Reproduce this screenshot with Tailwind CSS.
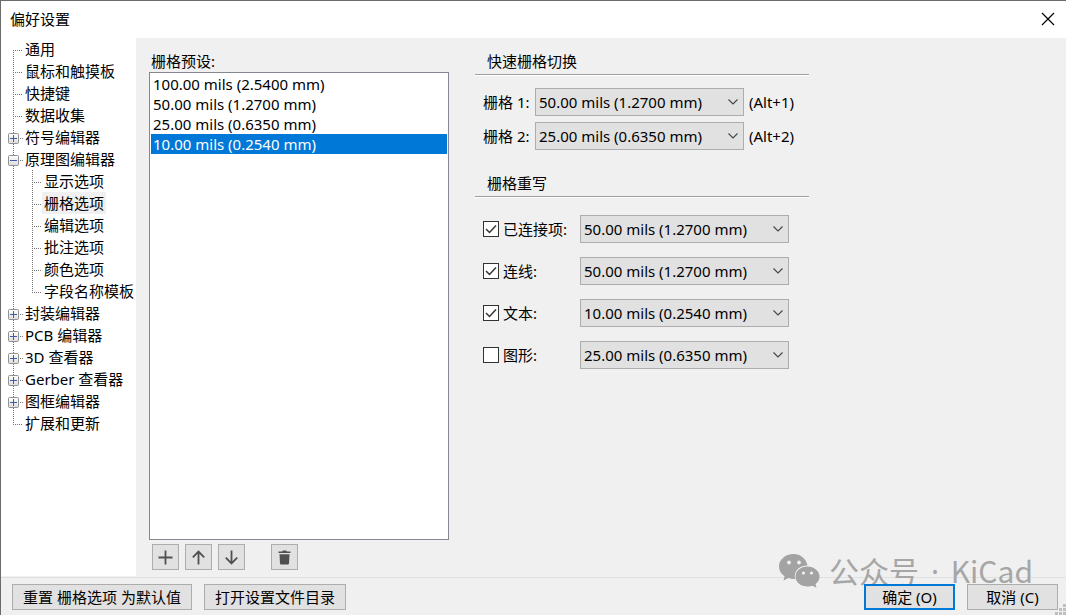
<!DOCTYPE html>
<html lang="zh-CN">
<head>
<meta charset="utf-8">
<title>偏好设置</title>
<script src="https://cdn.jsdelivr.net/npm/@tailwindcss/browser@4"></script>
</head>
<body class="bg-[#f0f0f0] text-black font-['Noto_Sans','Noto_Sans_CJK_SC',sans-serif] text-[15px] leading-[20px]">

<svg class="absolute size-0" aria-hidden="true">
  <defs>
    <linearGradient id="boxfill" x1="0" y1="0" x2="0" y2="1"><stop offset="0" stop-color="#fff"/><stop offset="1" stop-color="#dcdcdc"/></linearGradient>
    <symbol id="first" viewBox="0 0 24 22"><path d="M12.5 12V22M12 12.5H22" fill="none" stroke="#777" stroke-dasharray="1 1"/></symbol>
    <symbol id="mid" viewBox="0 0 24 22"><path d="M12.5 0V22M12 12.5H22" fill="none" stroke="#777" stroke-dasharray="1 1"/></symbol>
    <symbol id="last" viewBox="0 0 24 22"><path d="M12.5 0V12M12 12.5H22" fill="none" stroke="#777" stroke-dasharray="1 1"/></symbol>
    <symbol id="minus" viewBox="0 0 24 22"><path d="M12.5 0V22M19 12.5H22" fill="none" stroke="#777" stroke-dasharray="1 1"/><rect x="7.5" y="7.5" width="10" height="10" rx="1" fill="url(#boxfill)" stroke="#919191"/><path d="M9 12.5H16" stroke="#3c5ea8"/></symbol>
    <symbol id="plus" viewBox="0 0 24 22"><path d="M12.5 0V22M19 12.5H22" fill="none" stroke="#777" stroke-dasharray="1 1"/><rect x="7.5" y="7.5" width="10" height="10" rx="1" fill="url(#boxfill)" stroke="#919191"/><path d="M9 12.5H16M12.500 9V16" stroke="#3c5ea8"/></symbol>
    <symbol id="sub" viewBox="0 0 41 22"><path d="M12.5 0V22M31.5 0V22M31 12.5H41" fill="none" stroke="#777" stroke-dasharray="1 1"/></symbol>
    <symbol id="sublast" viewBox="0 0 41 22"><path d="M12.5 0V22M31.5 0V12M31 12.5H41" fill="none" stroke="#777" stroke-dasharray="1 1"/></symbol>
    <symbol id="chev" viewBox="0 0 10 6"><path d="M0.5 0.5L5 5L9.5 0.5" fill="none" stroke="#444" stroke-width="1.1"/></symbol>
    <symbol id="tick" viewBox="0 0 16 16"><path d="M3 8L6.5 11.5L13 4.5" fill="none" stroke="#333" stroke-width="1.5"/></symbol>
  </defs>
</svg>

<div class="relative flex min-h-screen flex-col border-l border-t border-[#6b6b6b]">
  <header class="flex h-[37px] items-center justify-between bg-white pb-[2px] pl-[9px] pr-[11px]">
    <h1>偏好设置</h1>
    <button aria-label="关闭" class="size-[14px]"><svg viewBox="0 0 14 14" class="size-[14px]"><path d="M1 1L13 13M13 1L1 13" stroke="#000" stroke-width="1.2"/></svg></button>
  </header>

  <div class="flex flex-1">
    <nav aria-label="设置页面" class="w-[135px] shrink-0 overflow-hidden whitespace-nowrap bg-white leading-[22px]">
      <ul>
        <li class="flex h-[22px]"><svg class="h-[22px] w-6 shrink-0"><use href="#first"/></svg><a href="#">通用</a></li>
        <li class="flex h-[22px]"><svg class="h-[22px] w-6 shrink-0"><use href="#mid"/></svg><a href="#">鼠标和触摸板</a></li>
        <li class="flex h-[22px]"><svg class="h-[22px] w-6 shrink-0"><use href="#mid"/></svg><a href="#">快捷键</a></li>
        <li class="flex h-[22px]"><svg class="h-[22px] w-6 shrink-0"><use href="#mid"/></svg><a href="#">数据收集</a></li>
        <li class="flex h-[22px]"><svg class="h-[22px] w-6 shrink-0"><use href="#plus"/></svg><a href="#">符号编辑器</a></li>
        <li>
          <div class="flex h-[22px]"><svg class="h-[22px] w-6 shrink-0"><use href="#minus"/></svg><a href="#">原理图编辑器</a></div>
          <ul>
            <li class="flex h-[22px]"><svg class="h-[22px] w-[41px] shrink-0"><use href="#sub"/></svg><a href="#" class="px-[2px]">显示选项</a></li>
            <li class="flex h-[22px]"><svg class="h-[22px] w-[41px] shrink-0"><use href="#sub"/></svg><a href="#" aria-current="page" class="bg-[#f0f0f0] px-[2px]">栅格选项</a></li>
            <li class="flex h-[22px]"><svg class="h-[22px] w-[41px] shrink-0"><use href="#sub"/></svg><a href="#" class="px-[2px]">编辑选项</a></li>
            <li class="flex h-[22px]"><svg class="h-[22px] w-[41px] shrink-0"><use href="#sub"/></svg><a href="#" class="px-[2px]">批注选项</a></li>
            <li class="flex h-[22px]"><svg class="h-[22px] w-[41px] shrink-0"><use href="#sub"/></svg><a href="#" class="px-[2px]">颜色选项</a></li>
            <li class="flex h-[22px]"><svg class="h-[22px] w-[41px] shrink-0"><use href="#sublast"/></svg><a href="#" class="px-[2px]">字段名称模板</a></li>
          </ul>
        </li>
        <li class="flex h-[22px]"><svg class="h-[22px] w-6 shrink-0"><use href="#plus"/></svg><a href="#">封装编辑器</a></li>
        <li class="flex h-[22px]"><svg class="h-[22px] w-6 shrink-0"><use href="#plus"/></svg><a href="#">PCB 编辑器</a></li>
        <li class="flex h-[22px]"><svg class="h-[22px] w-6 shrink-0"><use href="#plus"/></svg><a href="#">3D 查看器</a></li>
        <li class="flex h-[22px]"><svg class="h-[22px] w-6 shrink-0"><use href="#plus"/></svg><a href="#">Gerber 查看器</a></li>
        <li class="flex h-[22px]"><svg class="h-[22px] w-6 shrink-0"><use href="#plus"/></svg><a href="#">图框编辑器</a></li>
        <li class="flex h-[22px]"><svg class="h-[22px] w-6 shrink-0"><use href="#last"/></svg><a href="#">扩展和更新</a></li>
      </ul>
    </nav>

    <main class="flex flex-1 gap-[26px] pl-[13px] pt-[13px]">
      <section class="flex w-[300px] flex-col pb-[6px]">
        <label for="presets" class="pl-[2px]">栅格预设:</label>
        <select id="presets" size="4" class="mt-px block w-full flex-1 overflow-hidden border border-[#828790] bg-white p-px outline-none">
          <option class="h-5 min-h-0 p-0 px-[2px] leading-[20px]">100.00 mils (2.5400 mm)</option>
          <option class="h-5 min-h-0 p-0 px-[2px] leading-[20px]">50.00 mils (1.2700 mm)</option>
          <option class="h-5 min-h-0 p-0 px-[2px] leading-[20px]">25.00 mils (0.6350 mm)</option>
          <option selected class="h-5 min-h-0 p-0 px-[2px] leading-[20px] checked:bg-[linear-gradient(#0078d7,#0078d7)] checked:[-webkit-text-fill-color:white]">10.00 mils (0.2540 mm)</option>
        </select>
        <div class="mt-1 flex gap-[6px] pl-[3px]">
          <button aria-label="添加" class="flex h-[26px] w-[27px] items-center justify-center border border-[#adadad] bg-[#e1e1e1]"><svg viewBox="0 0 15 15" class="size-[15px]"><path d="M7.500 0.500V14.500M0.500 7.500H14.500" stroke="#505050" stroke-width="1.8"/></svg></button>
          <button aria-label="上移" class="flex h-[26px] w-[27px] items-center justify-center border border-[#adadad] bg-[#e1e1e1]"><svg viewBox="0 0 15 15" class="size-[15px]"><path d="M7.500 14.500V2M1.800 7.300L7.500 1.600L13.200 7.300" fill="none" stroke="#505050" stroke-width="1.8"/></svg></button>
          <button aria-label="下移" class="flex h-[26px] w-[27px] items-center justify-center border border-[#adadad] bg-[#e1e1e1]"><svg viewBox="0 0 15 15" class="size-[15px]"><path d="M7.500 0.500V13M1.800 7.700L7.500 13.400L13.200 7.700" fill="none" stroke="#505050" stroke-width="1.8"/></svg></button>
          <button aria-label="删除" class="ml-5 flex h-[26px] w-[27px] items-center justify-center border border-[#adadad] bg-[#e1e1e1]"><svg viewBox="0 0 15 15" class="size-[15px]"><path d="M1.500 1.500H5L6 0.500H9L10 1.500H13.500V3.100H1.500ZM2.500 4.200H12.500L12 13.500Q11.900 14.500 10.900 14.500H4.100Q3.100 14.500 3 13.500Z" fill="#505050"/></svg></button>
        </div>
      </section>

      <div class="w-[334px]">
        <section>
          <h2 class="border-b border-[#a0a0a0] pb-[3px] pl-3 shadow-[0_1px_0_#fff]">快速栅格切换</h2>
          <div class="mt-[13px] flex flex-col gap-[6px] pl-2">
            <div class="flex items-center">
              <label for="g1" class="w-[52px]">栅格 1:</label>
              <div class="grid w-[209px] items-center"><select id="g1" class="col-start-1 row-start-1 h-7 appearance-none border border-[#adadad] bg-[#e1e1e1] pl-[3px]"><option>50.00 mils (1.2700 mm)</option></select><svg class="pointer-events-none col-start-1 row-start-1 mr-[6px] h-[6px] w-[10px] justify-self-end"><use href="#chev"/></svg></div>
              <span class="pl-[5px]">(Alt+1)</span>
            </div>
            <div class="flex items-center">
              <label for="g2" class="w-[52px]">栅格 2:</label>
              <div class="grid w-[209px] items-center"><select id="g2" class="col-start-1 row-start-1 h-7 appearance-none border border-[#adadad] bg-[#e1e1e1] pl-[3px]"><option>25.00 mils (0.6350 mm)</option></select><svg class="pointer-events-none col-start-1 row-start-1 mr-[6px] h-[6px] w-[10px] justify-self-end"><use href="#chev"/></svg></div>
              <span class="pl-[5px]">(Alt+2)</span>
            </div>
          </div>
        </section>
        <section class="mt-[23px]">
          <h2 class="border-b border-[#a0a0a0] pb-[3px] pl-3 shadow-[0_1px_0_#fff]">栅格重写</h2>
          <div class="mt-[18px] flex flex-col gap-[14px] pl-2">
            <div class="flex items-center">
              <span class="grid"><input id="c1" type="checkbox" checked class="peer col-start-1 row-start-1 size-4 appearance-none border border-[#333] bg-white"><svg class="pointer-events-none invisible col-start-1 row-start-1 size-4 peer-checked:visible"><use href="#tick"/></svg></span>
              <label for="c1" class="w-[81px] pl-1">已连接项:</label>
              <div class="grid w-[209px] items-center"><select aria-label="已连接项" class="col-start-1 row-start-1 h-7 appearance-none border border-[#adadad] bg-[#e1e1e1] pl-[3px]"><option>50.00 mils (1.2700 mm)</option></select><svg class="pointer-events-none col-start-1 row-start-1 mr-[6px] h-[6px] w-[10px] justify-self-end"><use href="#chev"/></svg></div>
            </div>
            <div class="flex items-center">
              <span class="grid"><input id="c2" type="checkbox" checked class="peer col-start-1 row-start-1 size-4 appearance-none border border-[#333] bg-white"><svg class="pointer-events-none invisible col-start-1 row-start-1 size-4 peer-checked:visible"><use href="#tick"/></svg></span>
              <label for="c2" class="w-[81px] pl-1">连线:</label>
              <div class="grid w-[209px] items-center"><select aria-label="连线" class="col-start-1 row-start-1 h-7 appearance-none border border-[#adadad] bg-[#e1e1e1] pl-[3px]"><option>50.00 mils (1.2700 mm)</option></select><svg class="pointer-events-none col-start-1 row-start-1 mr-[6px] h-[6px] w-[10px] justify-self-end"><use href="#chev"/></svg></div>
            </div>
            <div class="flex items-center">
              <span class="grid"><input id="c3" type="checkbox" checked class="peer col-start-1 row-start-1 size-4 appearance-none border border-[#333] bg-white"><svg class="pointer-events-none invisible col-start-1 row-start-1 size-4 peer-checked:visible"><use href="#tick"/></svg></span>
              <label for="c3" class="w-[81px] pl-1">文本:</label>
              <div class="grid w-[209px] items-center"><select aria-label="文本" class="col-start-1 row-start-1 h-7 appearance-none border border-[#adadad] bg-[#e1e1e1] pl-[3px]"><option>10.00 mils (0.2540 mm)</option></select><svg class="pointer-events-none col-start-1 row-start-1 mr-[6px] h-[6px] w-[10px] justify-self-end"><use href="#chev"/></svg></div>
            </div>
            <div class="flex items-center">
              <span class="grid"><input id="c4" type="checkbox" class="peer col-start-1 row-start-1 size-4 appearance-none border border-[#333] bg-white"><svg class="pointer-events-none invisible col-start-1 row-start-1 size-4 peer-checked:visible"><use href="#tick"/></svg></span>
              <label for="c4" class="w-[81px] pl-1">图形:</label>
              <div class="grid w-[209px] items-center"><select aria-label="图形" class="col-start-1 row-start-1 h-7 appearance-none border border-[#adadad] bg-[#e1e1e1] pl-[3px]"><option>25.00 mils (0.6350 mm)</option></select><svg class="pointer-events-none col-start-1 row-start-1 mr-[6px] h-[6px] w-[10px] justify-self-end"><use href="#chev"/></svg></div>
            </div>
          </div>
        </section>
      </div>
    </main>
  </div>

  <footer class="mt-px flex gap-3 border-t border-[#e0e0e0] pb-[5px] pl-[11px] pr-2 pt-[6px]">
    <button class="h-[26px] w-[180px] border border-[#adadad] bg-[#e1e1e1]">重置 栅格选项 为默认值</button>
    <button class="h-[26px] w-[142px] border border-[#adadad] bg-[#e1e1e1]">打开设置文件目录</button>
    <button class="relative z-10 ml-auto h-[26px] w-[91px] border-2 border-[#0078d7] bg-[#e1e1e1]">确定 (O)</button>
    <button class="relative z-10 h-[26px] w-[91px] border border-[#adadad] bg-[#e1e1e1]">取消 (C)</button>
  </footer>

  <svg class="absolute bottom-0 right-0 z-20 h-3 w-3" viewBox="0 0 12 12" aria-hidden="true"><path d="M9 1h3v3h-3zM5 5h3v3h-3zM9 5h3v3h-3zM1 9h3v3h-3zM5 9h3v3h-3zM9 9h3v3h-3z" fill="#bfbfbf"/></svg>

  <div class="pointer-events-none absolute bottom-[26px] right-[33px] flex items-center gap-[9px] whitespace-nowrap font-['Noto_Sans_CJK_SC',sans-serif] text-[30px] leading-[34px] text-[#a6a6a6]">
    <svg viewBox="0 0 41 34" class="h-[34px] w-[41px]" aria-hidden="true">
      <path d="M14.500 0C6.500 0 0 5.500 0 12.500C0 16.500 2 20 5.500 22.300L4.500 26.500L9.500 24C11 24.500 13 25 16 25C14.500 17 20 11.500 28.500 11.500C27 4.500 21.500 0 14.500 0Z" fill="#a3a3a3"/>
      <path d="M28.500 12.500C21.500 12.500 16.500 17 16.500 22.500C16.500 28.500 22 32.500 28.500 32.500C30.500 32.500 32 32.200 33.500 31.700L37.500 33.700L36.500 30C39 28.200 40.500 25.500 40.500 22.500C40.500 17 35 12.500 28.500 12.500Z" fill="#a3a3a3"/>
      <g fill="#f0f0f0"><circle cx="10" cy="8.500" r="1.900"/><circle cx="20" cy="8.500" r="1.900"/><circle cx="24.500" cy="19" r="1.600"/><circle cx="32.500" cy="19" r="1.600"/></g>
    </svg>
    <span>公众号<span class="px-1 font-['Noto_Sans']"> · </span>KiCad</span>
  </div>
</div>
</body>
</html>
